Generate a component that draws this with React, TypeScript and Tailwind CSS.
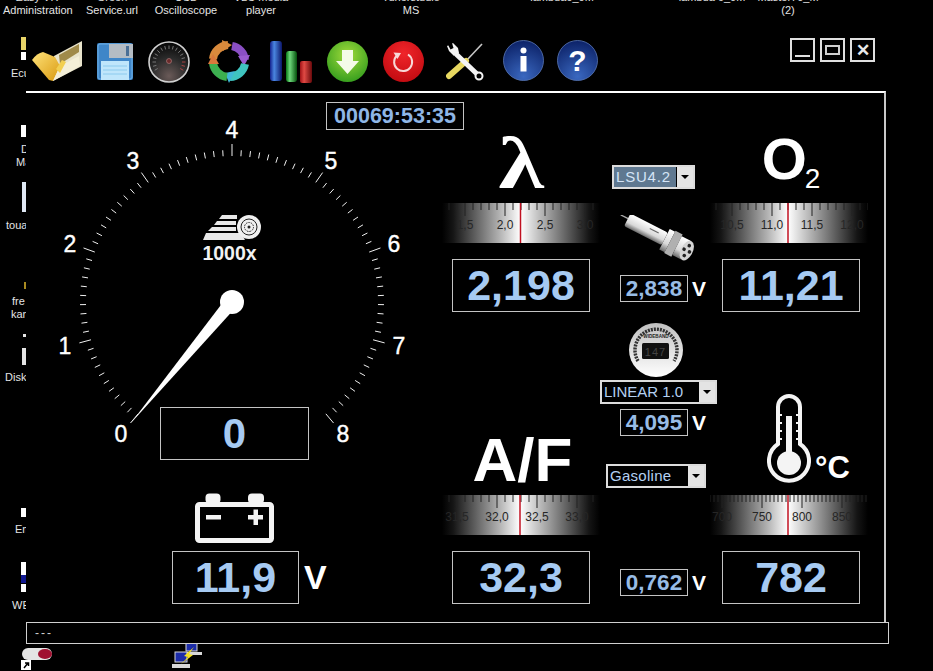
import { ReactNode } from 'react';

const range = (n: number) => Array.from({ length: n }, (_, i) => i);

function Folder() {
  return (
    <svg width="50" height="43" viewBox="0 0 50 43">
      <defs>
        <linearGradient id="fold" x1="0" y1="0" x2="1" y2="1">
          <stop offset="0" stopColor="#ffe27a" />
          <stop offset="1" stopColor="#d99a10" />
        </linearGradient>
      </defs>
      <path d="M22 16 L50 1 L50 26 L21 41Z" fill="#e9e4cc" />
      <path d="M27 15 L47 4 L47 12 L28 24Z" fill="#a08a4a" />
      <path d="M0 20 Q5 13 11 12 L23 17 L28 26 L21 41 L17 40Z" fill="url(#fold)" />
      <path d="M21 41 L28 26 L47 16 L48 26Z" fill="#f4efd8" />
      <path d="M24 29 L30 20 L34 22 L28 33Z" fill="#f2cf50" />
    </svg>
  );
}

function Floppy() {
  return (
    <svg width="36" height="37" viewBox="0 0 36 37">
      <rect x="0" y="0" width="36" height="37" rx="2" fill="#3f86c8" />
      <rect x="1" y="1" width="34" height="35" rx="2" fill="none" stroke="#6fb0e6" />
      <rect x="12" y="1" width="24" height="14" fill="#b4bcc4" />
      <rect x="29" y="3" width="3" height="10" fill="#4a6f96" />
      <rect x="4" y="18" width="28" height="19" fill="#bfe6fb" />
      <path d="M6 23H30M6 27H30M6 31H30" stroke="#8ccbee" />
    </svg>
  );
}

function Dial() {
  return (
    <svg width="42" height="42" viewBox="0 0 42 42">
      <defs>
        <radialGradient id="dialFace" cx="0.5" cy="0.85" r="0.8">
          <stop offset="0" stopColor="#6a5a58" />
          <stop offset="0.55" stopColor="#2c2c2c" />
          <stop offset="1" stopColor="#0a0a0a" />
        </radialGradient>
      </defs>
      <circle cx="21" cy="21" r="20" fill="url(#dialFace)" stroke="#d0d0d0" strokeWidth="1.6" />
      {range(17).map((i) => {
        const a = ((-120 + i * 15) * Math.PI) / 180;
        return (
          <line
            key={i}
            x1={21 + 13 * Math.sin(a)}
            y1={21 - 13 * Math.cos(a)}
            x2={21 + 16.5 * Math.sin(a)}
            y2={21 - 16.5 * Math.cos(a)}
            stroke={i > 13 ? '#a44' : '#777'}
          />
        );
      })}
      <circle cx="21" cy="20" r="2.5" fill="#6a2a2a" stroke="#b88" strokeWidth="0.6" />
    </svg>
  );
}

function Cycle() {
  return (
    <svg width="42" height="43" viewBox="0 0 42 43">
      <path d="M5 19 A16 16 0 0 1 20 5" fill="none" stroke="#d98a3c" strokeWidth="8" />
      <path d="M14 0 L24 5 L15 11Z" fill="#d98a3c" />
      <path d="M24 6 A16 16 0 0 1 37 20" fill="none" stroke="#8a4fc4" strokeWidth="8" />
      <path d="M42 15 L36 26 L30 16Z" fill="#9a5cd0" />
      <path d="M37 24 A16 16 0 0 1 22 37" fill="none" stroke="#3fc4c0" strokeWidth="8" />
      <path d="M27 31 L21 43 L17 33Z" fill="#3fb8d8" />
      <path d="M19 37 A16 16 0 0 1 5 23" fill="none" stroke="#3cb050" strokeWidth="8" />
      <path d="M0 24 L5 14 L11 24Z" fill="#d9783c" />
    </svg>
  );
}

function Bars() {
  return (
    <svg width="42" height="42" viewBox="0 0 42 42">
      <defs>
        <linearGradient id="barB" x1="0" x2="1" y1="0" y2="0">
          <stop offset="0" stopColor="#14208c" />
          <stop offset="0.35" stopColor="#4a86e0" />
          <stop offset="1" stopColor="#0c1668" />
        </linearGradient>
        <linearGradient id="barG" x1="0" x2="1" y1="0" y2="0">
          <stop offset="0" stopColor="#067814" />
          <stop offset="0.35" stopColor="#6fd87c" />
          <stop offset="1" stopColor="#04500c" />
        </linearGradient>
        <linearGradient id="barR" x1="0" x2="1" y1="0" y2="0">
          <stop offset="0" stopColor="#a01216" />
          <stop offset="0.35" stopColor="#e04a44" />
          <stop offset="1" stopColor="#6a0a0c" />
        </linearGradient>
      </defs>
      <rect x="0" y="0" width="12" height="40" rx="3" fill="url(#barB)" />
      <rect x="16" y="10" width="11" height="31" rx="3" fill="url(#barG)" />
      <rect x="30" y="20" width="12" height="22" rx="2" fill="url(#barR)" />
    </svg>
  );
}

function GreenDown() {
  return (
    <svg width="41" height="41" viewBox="0 0 41 41">
      <defs>
        <radialGradient id="greenBall" cx="0.5" cy="0.35" r="0.7">
          <stop offset="0" stopColor="#a2dc3c" />
          <stop offset="1" stopColor="#2f9a1c" />
        </radialGradient>
      </defs>
      <circle cx="20.5" cy="20.5" r="20.5" fill="url(#greenBall)" />
      <path d="M15 9 H26 V20 H32 L20.5 33 L9 20 H15Z" fill="#f4fbe8" />
    </svg>
  );
}

function RedRefresh() {
  return (
    <svg width="41" height="41" viewBox="0 0 41 41">
      <defs>
        <radialGradient id="redBall" cx="0.5" cy="0.3" r="0.75">
          <stop offset="0" stopColor="#f0252a" />
          <stop offset="1" stopColor="#c00a10" />
        </radialGradient>
      </defs>
      <circle cx="20.5" cy="20.5" r="20.5" fill="url(#redBall)" />
      <path d="M25 13.5 A9 9 0 1 1 14 14.5" fill="none" stroke="#f8d8d8" strokeWidth="2" />
      <path d="M10.5 11.5 L18 12 L14.5 18Z" fill="#f8d8d8" />
    </svg>
  );
}

function Tools() {
  return (
    <svg width="38" height="38" viewBox="0 0 38 38">
      <path d="M36 1 L20 18" stroke="#c8c8c8" strokeWidth="1.6" />
      <path d="M20 18 L3 33" stroke="#e8d860" strokeWidth="6" strokeLinecap="round" />
      <path d="M10 11 L31 31" stroke="#f4f4f4" strokeWidth="5" fill="none" />
      <path d="M1 3 L3 8 L8 13 L13 10 L12 5 L7 0Z" fill="#f4f4f4" />
      <path d="M1 0 H6 L7.5 5 L4.5 6.5 Z" fill="#000" />
      <circle cx="33" cy="33" r="3.5" fill="#000" stroke="#f4f4f4" strokeWidth="2" />
    </svg>
  );
}

function BlueBall({ id, children }: { id: string; children: ReactNode }) {
  return (
    <svg width="41" height="41" viewBox="0 0 41 41" className="-mt-[3px]">
      <defs>
        <radialGradient id={id} cx="0.5" cy="0.9" r="0.9">
          <stop offset="0" stopColor="#3a68c0" />
          <stop offset="1" stopColor="#0c2268" />
        </radialGradient>
      </defs>
      <circle cx="20.5" cy="20.5" r="20" fill={`url(#${id})`} stroke="#5a78b8" strokeWidth="0.8" />
      {children}
    </svg>
  );
}

function Toolbar() {
  return (
    <div className="flex h-[59px] items-center pl-[6px]">
      <Folder />
      <div className="ml-[15px]"><Floppy /></div>
      <div className="ml-[15px]"><Dial /></div>
      <div className="ml-[18px]"><Cycle /></div>
      <div className="ml-[20px]"><Bars /></div>
      <div className="ml-[15px]"><GreenDown /></div>
      <div className="ml-[15px]"><RedRefresh /></div>
      <div className="ml-[22px]"><Tools /></div>
      <div className="ml-[19px]">
        <BlueBall id="infoBall">
          <circle cx="20.5" cy="10.5" r="3" fill="#fff" />
          <rect x="17.5" y="16" width="6" height="15.5" fill="#fff" />
        </BlueBall>
      </div>
      <div className="ml-[13px]">
        <BlueBall id="helpBall">
          <text x="20.5" y="31" textAnchor="middle" fontSize="30" fontWeight="bold" fill="#fff">?</text>
        </BlueBall>
      </div>
      <div className="mt-[-23px] ml-[192px] flex gap-[5px]">
        <div className="flex h-[24px] w-[25px] items-end justify-center border-2 border-[#e0e0e0] pb-[3px]">
          <div className="h-[2px] w-[15px] bg-[#e0e0e0]" />
        </div>
        <div className="flex h-[24px] w-[25px] items-center justify-center border-2 border-[#e0e0e0]">
          <div className="h-[10px] w-[15px] border-2 border-[#d0d0d0]" />
        </div>
        <div className="flex h-[24px] w-[25px] items-center justify-center border-2 border-[#e0e0e0] text-[17px] leading-none font-bold text-[#e8e8e8]">
          ✕
        </div>
      </div>
    </div>
  );
}

function ValueBox({ value, className }: { value: string; className: string }) {
  return (
    <div className={`flex items-center justify-center border border-[#c4c4c4] font-bold text-[#a6caf2] ${className}`}>
      {value}
    </div>
  );
}

function SmallReading({ value, className }: { value: string; className?: string }) {
  return (
    <div className={`flex items-center ${className ?? ''}`}>
      <div className="ml-[20px] flex h-[27px] w-[68px] items-center justify-center border border-[#c4c4c4] text-[22.5px] font-bold text-[#98bce6]">
        {value}
      </div>
      <span className="ml-[4px] text-[21px] font-bold text-white">V</span>
    </div>
  );
}

function Scale({
  id,
  labels,
  first,
  red,
  step,
  perMajor,
}: {
  id: string;
  labels: string[];
  first: number;
  red: number;
  step: number;
  perMajor: number;
}) {
  const offset = first % step;
  const count = Math.ceil(158 / step);
  return (
    <svg width="158" height="40" viewBox="0 0 158 40" className="block">
      <defs>
        <linearGradient id={id} x1="0" x2="1" y1="0" y2="0">
          <stop offset="0" stopColor="#000" />
          <stop offset="0.07" stopColor="#151515" />
          <stop offset="0.2" stopColor="#5a5a5a" />
          <stop offset="0.36" stopColor="#b0b0b0" />
          <stop offset={red / 158} stopColor="#fff" />
          <stop offset="0.64" stopColor="#b0b0b0" />
          <stop offset="0.8" stopColor="#5a5a5a" />
          <stop offset="0.93" stopColor="#151515" />
          <stop offset="1" stopColor="#000" />
        </linearGradient>
      </defs>
      <rect width="158" height="40" fill={`url(#${id})`} />
      {range(count).map((i) => {
        const x = offset + i * step;
        const major = Math.abs(((x - first) / step) % perMajor) < 0.01;
        return <line key={i} x1={x} x2={x} y1="0" y2={major ? 13 : 7} stroke="#222" />;
      })}
      {labels.map((label, i) => (
        <text key={label} x={first + i * 40} y="26" textAnchor="middle" fontSize="12" fill="#262626">
          {label}
        </text>
      ))}
      <line x1={red} x2={red} y1="0" y2="40" stroke="#c01020" strokeWidth="1.5" />
    </svg>
  );
}

function Tacho() {
  const cx = 232;
  const cy = 302;
  const labels = [
    ['0', 121, 442],
    ['1', 65, 354],
    ['2', 70, 252],
    ['3', 133, 169],
    ['4', 232, 138],
    ['5', 331, 169],
    ['6', 394, 252],
    ['7', 399, 354],
    ['8', 343, 442],
  ] as const;
  return (
    <svg width="416" height="377" viewBox="26 93 416 377" className="block">
      {range(81).map((i) => {
        const a = ((-140 + i * 3.5) * Math.PI) / 180;
        const major = i % 10 === 0;
        const outer = major ? 158 : 152;
        return (
          <line
            key={i}
            x1={cx + 146 * Math.sin(a)}
            y1={cy - 146 * Math.cos(a)}
            x2={cx + outer * Math.sin(a)}
            y2={cy - outer * Math.cos(a)}
            stroke="#f0f0f0"
            strokeWidth="1"
          />
        );
      })}
      {labels.map(([t, x, y]) => (
        <text key={t} x={x} y={y} textAnchor="middle" fontSize="23" fill="#fff" stroke="#fff" strokeWidth="0.4">
          {t}
        </text>
      ))}
      {/* needle */}
      <path d="M131 423 L227 297 L237 306Z" fill="#fff" />
      <circle cx={cx} cy={cy} r="12" fill="#fff" />
      {/* wheel logo */}
      <path d="M222 215 L237 215 V219 H219Z M217 221 H236 V225 H214Z M212 227 H236 V231 H208Z M206 233 H241 L245 240 H203Z" fill="#e8e8e8" />
      <circle cx="249" cy="227" r="12" fill="#f0f0f0" />
      <circle cx="249" cy="227" r="8" fill="none" stroke="#222" />
      <circle cx="249" cy="227" r="4.5" fill="none" stroke="#222" strokeDasharray="1.5 1" />
      <circle cx="249" cy="227" r="1.5" fill="#222" />
      <text x="229.5" y="260" textAnchor="middle" fontSize="19.5" fontWeight="bold" fill="#f2f2f2">1000x</text>
    </svg>
  );
}

function Battery() {
  return (
    <svg width="80" height="50" viewBox="0 0 80 50" className="ml-[169px] block">
      <rect x="10.5" y="0.5" width="15" height="10" rx="4" fill="#f4f4f4" />
      <rect x="53" y="0.5" width="16" height="10" rx="4" fill="#f4f4f4" />
      <rect x="2.5" y="11.5" width="74" height="36" rx="2" fill="none" stroke="#f4f4f4" strokeWidth="5" />
      <rect x="11" y="22" width="15" height="4.5" fill="#f4f4f4" />
      <rect x="53" y="22" width="15" height="4.5" fill="#f4f4f4" />
      <rect x="58.5" y="16.5" width="4.5" height="15.5" fill="#f4f4f4" />
    </svg>
  );
}

function LambdaSensor() {
  return (
    <svg width="82" height="52" viewBox="0 0 82 52" className="block">
      <defs>
        <linearGradient id="probe" x1="0" y1="0" x2="0" y2="1">
          <stop offset="0" stopColor="#ffffff" />
          <stop offset="0.65" stopColor="#d8d8d8" />
          <stop offset="1" stopColor="#6a6a6a" />
        </linearGradient>
      </defs>
      <g transform="rotate(27 41 26)">
        <rect x="-4" y="19" width="10" height="1.4" fill="#aaa" />
        <rect x="4" y="14" width="42" height="14" rx="2" fill="url(#probe)" />
        <rect x="28" y="18" width="10" height="1.2" fill="#666" />
        <rect x="46" y="10" width="6" height="23" fill="url(#probe)" />
        <rect x="52" y="9" width="8" height="25" fill="#b0b0b0" />
        <rect x="60" y="11" width="10" height="21" fill="url(#probe)" />
        <ellipse cx="71" cy="21.5" rx="6" ry="10.5" fill="#d4d4d4" />
        <circle cx="71" cy="16" r="1.8" fill="#222" />
        <circle cx="71" cy="27" r="1.8" fill="#222" />
        <circle cx="74" cy="21.5" r="1.8" fill="#222" />
        <circle cx="68" cy="21.5" r="1.8" fill="#222" />
      </g>
    </svg>
  );
}

function WidebandGauge() {
  return (
    <svg width="54" height="54" viewBox="0 0 54 54" className="block">
      <defs>
        <linearGradient id="wbFace" x1="0" y1="0" x2="0" y2="1">
          <stop offset="0" stopColor="#c0c0c0" />
          <stop offset="1" stopColor="#ffffff" />
        </linearGradient>
      </defs>
      <circle cx="27" cy="27" r="27" fill="url(#wbFace)" />
      <path d="M9 38 A21 21 0 1 1 45 38" fill="none" stroke="#333" strokeWidth="3.5" strokeDasharray="2 1" />
      <text x="27" y="14.5" textAnchor="middle" fontSize="4.6" fontWeight="bold" fill="#222">WIDEBAND</text>
      <rect x="13" y="20" width="27" height="16" rx="1.5" fill="#111" />
      <text x="26.5" y="32.5" textAnchor="middle" fontSize="11" fill="#444" letterSpacing="1">147</text>
    </svg>
  );
}

function Thermometer() {
  return (
    <svg width="44" height="92" viewBox="0 0 44 92" className="block">
      <path
        d="M11 50 V13 A11 11 0 0 1 33 13 V50 A20 20 0 1 1 11 50Z"
        fill="none"
        stroke="#f4f4f4"
        strokeWidth="4"
      />
      <rect x="19" y="22" width="6" height="48" fill="#f4f4f4" />
      <circle cx="22" cy="69" r="12" fill="#f4f4f4" />
      <path d="M11 21 H15 M11 29 H15 M11 37 H15 M11 45 H15 M29 21 H33 M29 29 H33 M29 37 H33 M29 45 H33" stroke="#f4f4f4" strokeWidth="2" />
    </svg>
  );
}

function Dropdown({ label, className, textClass }: { label: string; className: string; textClass: string }) {
  return (
    <div className={`flex h-[24px] border-2 border-[#dcdcdc] bg-black ${className}`}>
      <div className={`flex-1 pl-[2px] text-[15px] leading-[20px] ${textClass}`}>{label}</div>
      <div className="flex w-[17px] items-center justify-center border-l border-black bg-[#e4e4e4]">
        <div className="h-0 w-0 border-x-[4px] border-t-[4px] border-x-transparent border-t-black" />
      </div>
    </div>
  );
}

function Dashboard() {
  return (
    <div className="flex h-[531px] w-[860px] border-t-2 border-r-2 border-t-white border-r-[#c8c8c8]">
      {/* gauge column */}
      <div className="relative w-[416px]">
        <Tacho />
        <div className="absolute top-[9px] left-[300px] flex h-[28px] w-[138px] items-center justify-center border border-[#c4c4c4] text-[21.5px] font-bold text-[#8fb6e6]">
          00069:53:35
        </div>
        <ValueBox value="0" className="absolute top-[314px] left-[134px] h-[53px] w-[149px] text-[42px]" />
        <div className="mt-[23px]">
          <Battery />
        </div>
        <div className="mt-[8px] ml-[146px] flex items-center">
          <ValueBox value="11,9" className="h-[53px] w-[127px] text-[43px]" />
          <span className="ml-[5px] text-[34px] font-bold text-white">V</span>
        </div>
      </div>

      {/* lambda + A/F column */}
      <div className="w-[158px] pt-[37px]">
        <div className="flex h-[73px] justify-center">
          <span className="scale-x-125 font-['Liberation_Serif',serif] text-[74px] leading-[66px] font-bold text-white">λ</span>
        </div>
        <Scale id="scaleL" labels={['1,5', '2,0', '2,5', '3,0']} first={23} red={78.5} step={8} perMajor={5} />
        <ValueBox value="2,198" className="mt-4 ml-[10px] h-[53px] w-[138px] text-[43px]" />
        <div className="mt-[82px] flex h-[101px] items-end justify-center pb-[4px] pl-[3px]">
          <span className="text-[62px] leading-none font-bold text-white">A/F</span>
        </div>
        <Scale id="scaleAF" labels={['31,5', '32,0', '32,5', '33,0']} first={15} red={78} step={8} perMajor={5} />
        <ValueBox value="32,3" className="mt-4 ml-[10px] h-[53px] w-[138px] text-[43px]" />
      </div>

      {/* sensor column */}
      <div className="flex w-[110px] flex-col pt-[72px]">
        <div className="ml-[12px] flex h-[24px] w-[83px] border-2 border-[#dcdcdc] bg-black">
          <div className="flex-1 bg-[#5f7890] pl-[2px] text-[15px] leading-[20px] tracking-[0.8px] text-[#d4e4f6]">LSU4.2</div>
          <div className="flex w-[17px] items-center justify-center border-l border-black bg-[#e4e4e4]">
            <div className="h-0 w-0 border-x-[4px] border-t-[4px] border-x-transparent border-t-black" />
          </div>
        </div>
        <div className="mt-[26px] ml-[17px]">
          <LambdaSensor />
        </div>
        <SmallReading value="2,838" className="mt-[8px]" />
        <div className="mt-[21px] ml-[29px]">
          <WidebandGauge />
        </div>
        <Dropdown label="LINEAR 1.0" className="mt-[3px] w-[117px]" textClass="text-[#b4d0f2]" />
        <SmallReading value="4,095" className="mt-[5px]" />
        <Dropdown label="Gasoline" className="mt-[28px] ml-[6px] w-[100px] tracking-wide" textClass="text-[#b4d0f2]" />
        <SmallReading value="0,762" className="mt-[81px]" />
      </div>

      {/* O2 + temperature column */}
      <div className="w-[158px] pt-[37px]">
        <div className="flex h-[73px] items-start justify-center pl-[4px]">
          <span className="mt-[1px] text-[58px] leading-[56px] font-bold text-white">O</span>
          <span className="mt-[34px] -ml-[2px] text-[28px] leading-[30px] text-white">2</span>
        </div>
        <Scale id="scaleO" labels={['10,5', '11,0', '11,5', '12,0']} first={22} red={78} step={8} perMajor={5} />
        <ValueBox value="11,21" className="mt-4 ml-[12px] h-[53px] w-[138px] text-[43px]" />
        <div className="mt-[82px] flex h-[101px] items-start pl-[57px]">
          <Thermometer />
          <span className="mt-[56px] ml-[4px] text-[31px] leading-[36px] font-bold text-white">°C</span>
        </div>
        <Scale id="scaleT" labels={['700', '750', '800', '850']} first={12} red={78} step={4} perMajor={10} />
        <ValueBox value="782" className="mt-4 ml-[12px] h-[53px] w-[138px] text-[43px]" />
      </div>
    </div>
  );
}

export default function App() {
  return (
    <div className="relative h-[671px] w-[933px] overflow-hidden bg-black font-['Liberation_Sans',sans-serif] text-[11px] leading-[13px] text-[#e4e4e4]">
      {/* desktop icons behind the window */}
      <div className="absolute top-[-9px] left-[3px] w-[68px] text-center">Easy VR<br />Administration</div>
      <div className="absolute top-[-9px] left-[80px] w-[64px] text-center">Green<br />Service.url</div>
      <div className="absolute top-[-9px] left-[150px] w-[72px] text-center">USB<br />Oscilloscope</div>
      <div className="absolute top-[-9px] left-[230px] w-[62px] text-center">VLC media<br />player</div>
      <div className="absolute top-[-9px] left-[370px] w-[82px] text-center">Tunerstudio<br />MS</div>
      <div className="absolute top-[-9px] left-[520px] w-[84px] text-center">lambda6_0M</div>
      <div className="absolute top-[-9px] left-[670px] w-[84px] text-center">lambda 6_0M</div>
      <div className="absolute top-[-9px] left-[750px] w-[76px] text-center">Master70_M<br />(2)</div>

      <div className="absolute top-[37px] left-[21px] h-[13px] w-[5px] bg-[#e8d468]" />
      <div className="absolute top-[52px] left-[21px] h-[8px] w-[5px] bg-white" />
      <div className="absolute top-[67px] left-[11px]">Ecu</div>
      <div className="absolute top-[125px] left-[21px] h-[12px] w-[5px] bg-white" />
      <div className="absolute top-[143px] left-[21px]">D</div>
      <div className="absolute top-[156px] left-[16px]">Ma</div>
      <div className="absolute top-[182px] left-[22px] h-[30px] w-[4px] bg-[#dfe8f4]" />
      <div className="absolute top-[219px] left-[6px]">toua</div>
      <div className="absolute top-[282px] left-[24px] h-[7px] w-[2px] bg-[#a88a20]" />
      <div className="absolute top-[295px] left-[12px]">fre</div>
      <div className="absolute top-[308px] left-[11px]">kan</div>
      <div className="absolute top-[334px] left-[23px] h-[3px] w-[3px] bg-[#e4e4e4]" />
      <div className="absolute top-[348px] left-[22px] h-[17px] w-[4px] bg-[#e4e4e4]" />
      <div className="absolute top-[371px] left-[5px]">Disk</div>
      <div className="absolute top-[508px] left-[21px] h-[9px] w-[5px] bg-white" />
      <div className="absolute top-[523px] left-[15px]">Em</div>
      <div className="absolute top-[562px] left-[21px] h-[13px] w-[5px] bg-white" />
      <div className="absolute top-[575px] left-[21px] h-[8px] w-[5px] bg-[#101890]" />
      <div className="absolute top-[584px] left-[21px] h-[8px] w-[5px] bg-white" />
      <div className="absolute top-[599px] left-[12px]">WE</div>

      <svg width="32" height="23" viewBox="0 0 32 23" className="absolute top-[648px] left-[21px]">
        <rect x="1" y="0" width="30" height="12" rx="6" fill="#e4e4e4" />
        <ellipse cx="24" cy="6" rx="7" ry="5" fill="#a01030" />
        <rect x="0" y="12" width="10" height="10" fill="#fff" />
        <path d="M3 20 L7 15 M4 15 H7.5 V18" stroke="#000" strokeWidth="1.5" fill="none" />
      </svg>
      <svg width="32" height="28" viewBox="0 0 32 28" className="absolute top-[643px] left-[172px]">
        <rect x="14" y="0" width="11" height="8" fill="#1c2ca8" stroke="#d8d8d8" />
        <rect x="12" y="9" width="18" height="3" fill="#d8d8d8" />
        <rect x="3" y="9" width="12" height="10" fill="#1c2ca8" stroke="#d8d8d8" />
        <rect x="0" y="21" width="18" height="4" fill="#d8d8d8" />
        <path d="M22 4 L12 13 L16 14 L9 21 L21 12 L17 11Z" fill="#f4e020" />
      </svg>

      {/* application window */}
      <div className="absolute top-[32px] left-[26px] w-[863px] bg-black">
        <Toolbar />
        <Dashboard />
        <div className="h-[22px] border border-[#d0d0d0] pl-[8px] text-[12px] leading-[20px] tracking-[2px] text-[#d0d0d0]">
          ---
        </div>
      </div>
    </div>
  );
}
